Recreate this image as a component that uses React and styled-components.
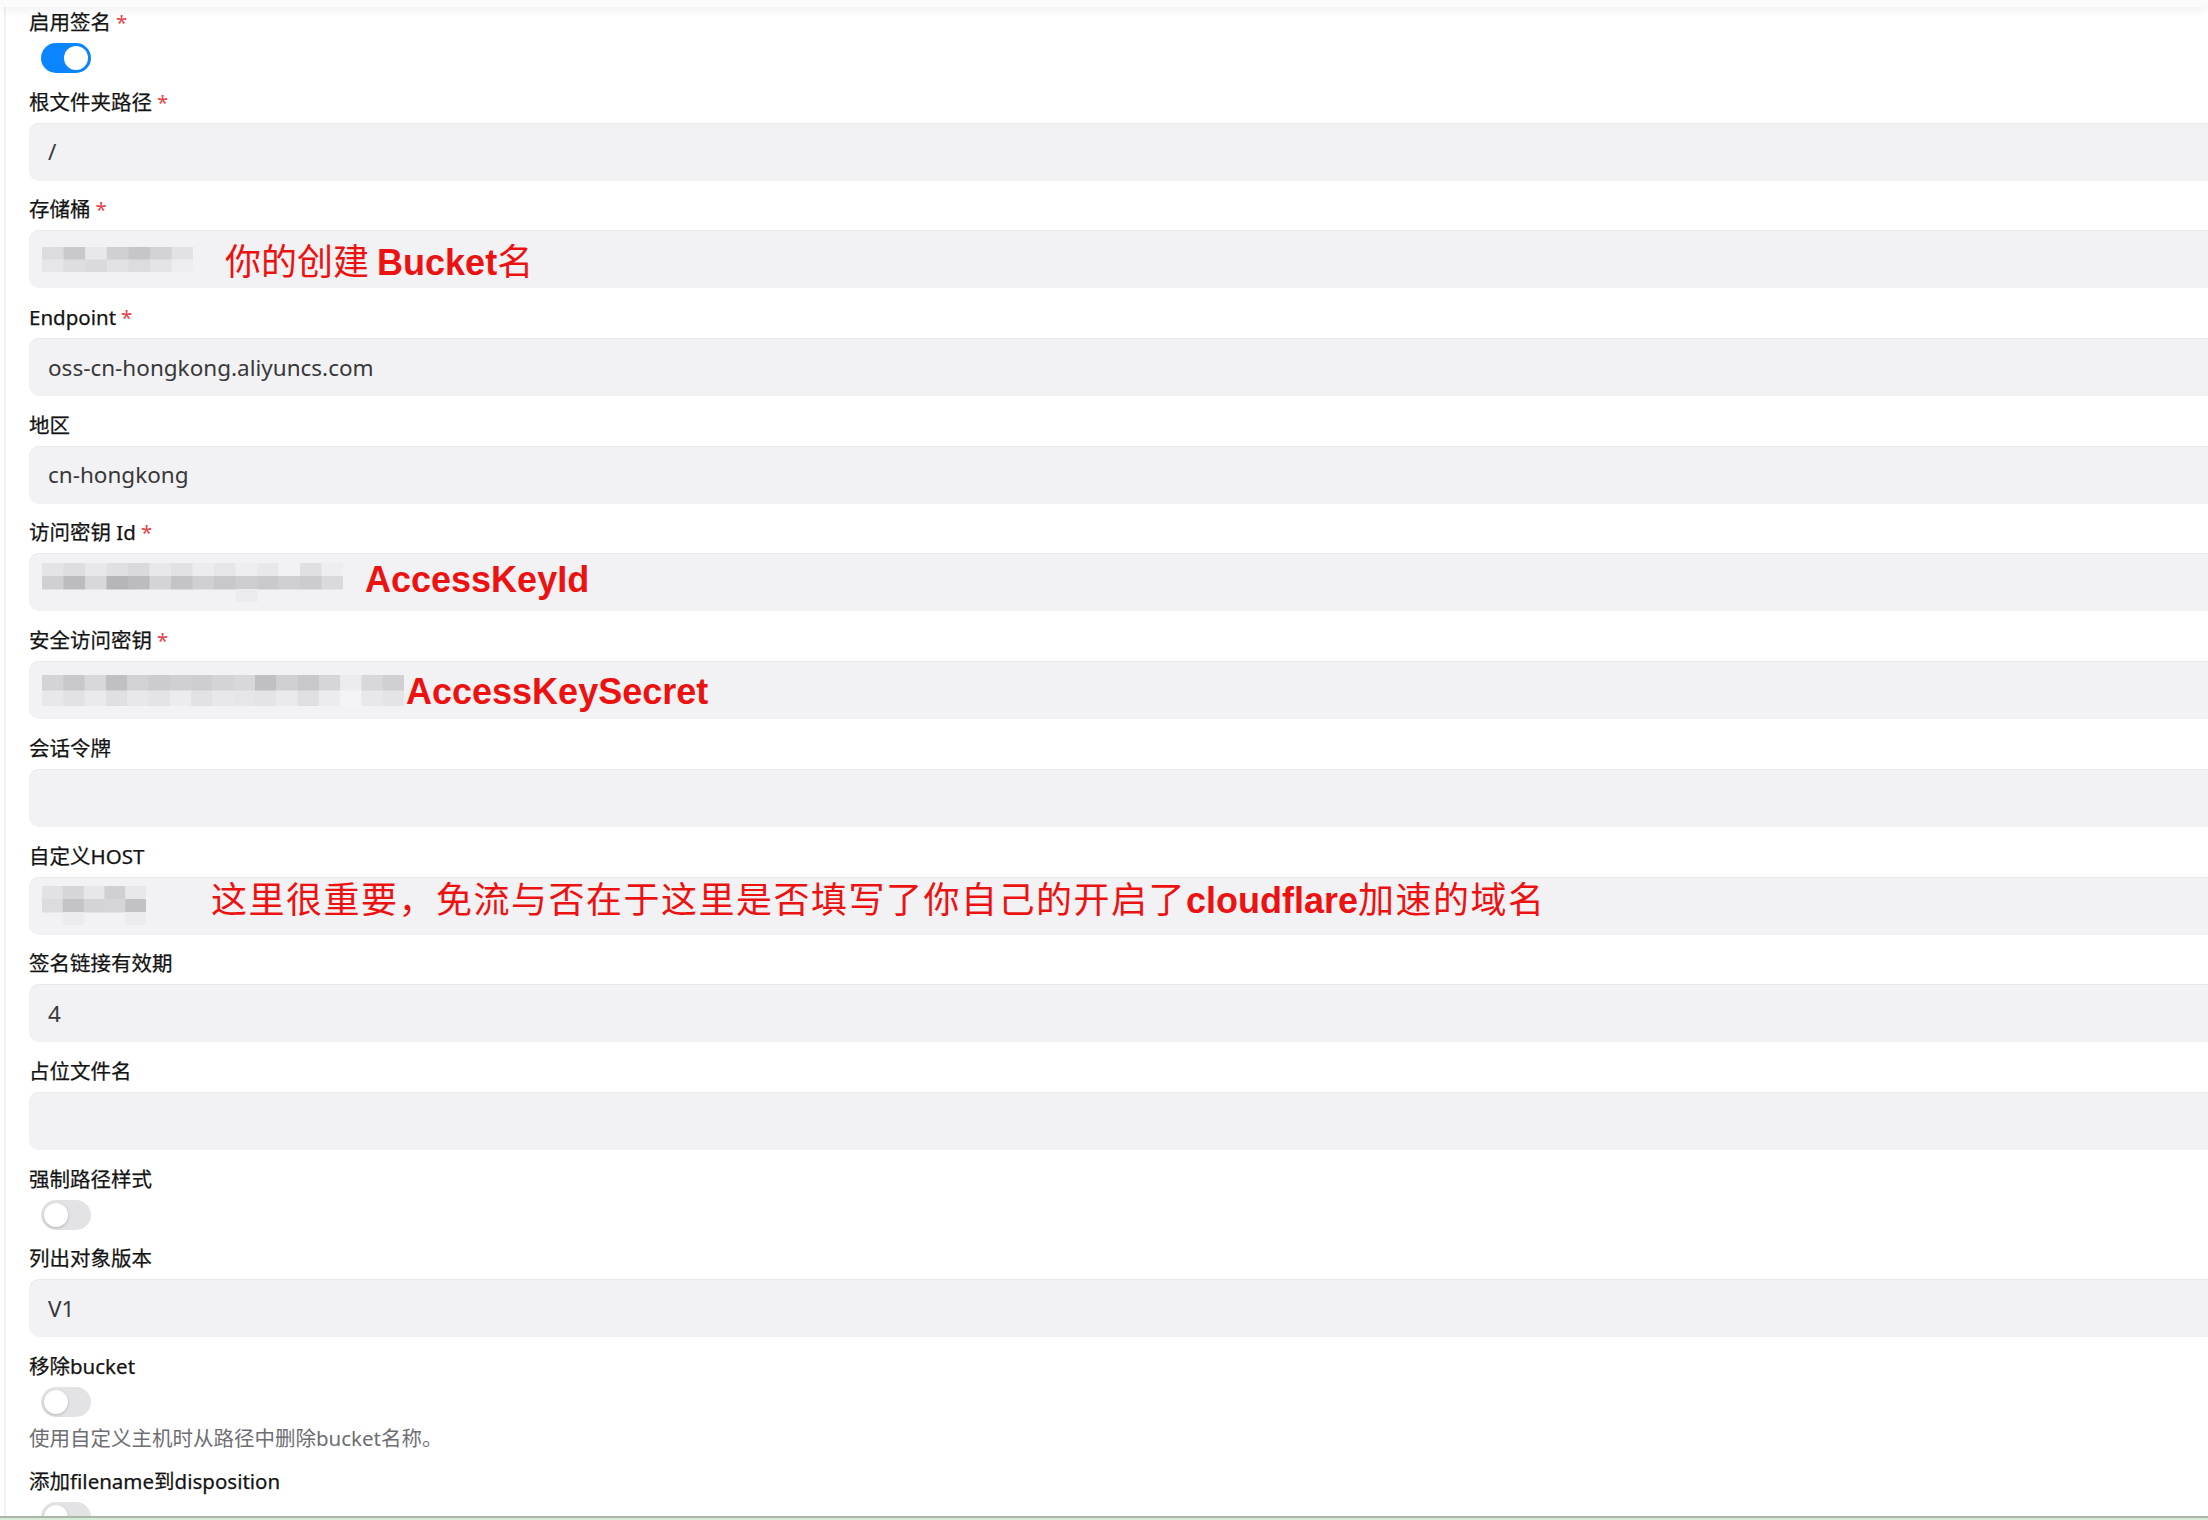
import React from 'react'
import styled, { createGlobalStyle } from 'styled-components'

const GlobalStyle = createGlobalStyle`
  html, body { margin: 0; padding: 0; background: #fff; }
  body {
    font-family: "Noto Sans", "Noto Sans CJK SC", sans-serif;
    -webkit-font-smoothing: antialiased;
  }
`

const Page = styled.div`
  height: 100vh;
  display: flex;
  flex-direction: column;
  overflow: hidden;
  background: #fff;
`

const TopBar = styled.div`
  flex: none;
  height: 7px;
  background: #fbfbfb;
  box-shadow: 0 3px 10px rgba(0, 0, 0, 0.07);
  position: relative;
  z-index: 1;
`

const Main = styled.main`
  flex: 1;
  min-height: 0;
  overflow: hidden;
  margin-left: 4px;
  border-left: 2px solid #f1f1f2;
  padding-left: 23px;
`

const BottomEdge = styled.div`
  flex: none;
  height: 2px;
  border-top: 2px solid #a9b6a9;
  background: #d6ecd6;
`

const Form = styled.div`
  display: flex;
  flex-direction: column;
  gap: 13.7px;
  margin-right: -40px;
`

const Field = styled.div`
  display: flex;
  flex-direction: column;
  align-items: flex-start;
`

const Label = styled.div`
  height: 30px;
  line-height: 30px;
  margin-bottom: 6px;
  font-size: 20.5px;
  font-weight: 400;
  color: #141414;
  -webkit-text-stroke: 0.25px #141414;
  white-space: nowrap;
`

const Star = styled.span`
  margin-left: 5px;
  color: #e5474d;
  -webkit-text-stroke: 0;
`

const InputBox = styled.div`
  align-self: stretch;
  height: 58px;
  box-sizing: border-box;
  display: flex;
  align-items: center;
  padding-left: ${p => (p.$masked ? 13 : 19)}px;
  border-radius: 10px;
  background: #f2f2f4;
  box-shadow: inset 0 1px 0 #e9e9eb;
  font-size: 22.5px;
  color: #38383a;
  white-space: nowrap;
`

const Switch = styled.div`
  position: relative;
  width: 50px;
  height: 30px;
  margin-left: 12px;
  border-radius: 15px;
  background: ${p => (p.$on ? '#0a84ff' : '#e3e3e6')};

  &::after {
    content: '';
    position: absolute;
    top: 3px;
    left: ${p => (p.$on ? 23 : 3)}px;
    width: 24px;
    height: 24px;
    border-radius: 50%;
    background: #fff;
    box-shadow: ${p => (p.$on ? 'none' : '0 1px 3px rgba(0,0,0,0.22)')};
  }
`

const Help = styled.div`
  margin-top: 7px;
  line-height: 28px;
  font-size: 20.5px;
  color: #6e6e73;
`

const Note = styled.span`
  margin-left: ${p => p.$gap}px;
  transform: translateY(${p => p.$dy || 0}px);
  font-family: "Noto Sans CJK SC", sans-serif;
  font-size: 36px;
  line-height: 1;
  color: #ec1212;
  letter-spacing: ${p => p.$spacing || 0}px;
  white-space: nowrap;
`

const Strong = styled.b`
  font-family: "Liberation Sans", Arial, sans-serif;
  font-weight: 700;
  letter-spacing: 0;
`

function Mosaic({ rows, cellW, cellH }) {
  const w = Math.round(rows[0].length * cellW)
  const h = Math.round(rows.length * cellH)
  return (
    <svg width={w} height={h} viewBox={`0 0 ${w} ${h}`} style={{ flex: 'none' }}>
      {rows.map((row, r) =>
        row.map((v, c) =>
          v >= 255 ? null : (
            <rect
              key={`${r}-${c}`}
              x={c * cellW}
              y={r * cellH}
              width={cellW + 0.5}
              height={cellH + 0.5}
              fill={`rgb(${v},${v},${v + 2})`}
            />
          )
        )
      )}
    </svg>
  )
}

const bucketMask = [
  [220, 200, 232, 208, 198, 210, 226],
  [230, 222, 218, 226, 220, 228, 238]
]

const idMask = [
  [228, 222, 232, 224, 218, 232, 226, 236, 230, 238, 232, 242, 224, 238],
  [208, 188, 216, 182, 188, 212, 196, 208, 200, 206, 202, 208, 204, 218],
  [255, 255, 255, 255, 255, 255, 255, 255, 255, 236, 255, 255, 255, 255]
]

const secretMask = [
  [212, 200, 216, 192, 210, 204, 208, 206, 212, 216, 192, 208, 200, 214, 236, 216, 208],
  [232, 226, 234, 224, 232, 228, 236, 226, 232, 230, 228, 234, 224, 236, 244, 232, 228]
]

const hostMask = [
  [226, 214, 230, 208, 232],
  [220, 196, 212, 214, 194],
  [255, 236, 255, 255, 236]
]

const fields = [
  { label: '启用签名', required: true, toggle: true, on: true },
  { label: '根文件夹路径', required: true, value: '/' },
  {
    label: '存储桶',
    required: true,
    mask: { rows: bucketMask, cellW: 21.6, cellH: 12.5 },
    note: (
      <Note $gap={32} $dy={2}>
        你的创建 <Strong>Bucket</Strong>名
      </Note>
    )
  },
  { label: 'Endpoint', required: true, value: 'oss-cn-hongkong.aliyuncs.com' },
  { label: '地区', value: 'cn-hongkong' },
  {
    label: '访问密钥 Id',
    required: true,
    mask: { rows: idMask, cellW: 21.5, cellH: 13 },
    note: (
      <Note $gap={22} $dy={-4}>
        <Strong>AccessKeyId</Strong>
      </Note>
    )
  },
  {
    label: '安全访问密钥',
    required: true,
    mask: { rows: secretMask, cellW: 21.3, cellH: 15.5 },
    note: (
      <Note $gap={2}>
        <Strong>AccessKeySecret</Strong>
      </Note>
    )
  },
  { label: '会话令牌', value: '' },
  {
    label: '自定义HOST',
    mask: { rows: hostMask, cellW: 20.8, cellH: 13 },
    note: (
      <Note $gap={65} $spacing={1.5} $dy={-7}>
        这里很重要，免流与否在于这里是否填写了你自己的开启了<Strong>cloudflare</Strong>加速的域名
      </Note>
    )
  },
  { label: '签名链接有效期', value: '4' },
  { label: '占位文件名', value: '' },
  { label: '强制路径样式', toggle: true },
  { label: '列出对象版本', value: 'V1' },
  { label: '移除bucket', toggle: true, help: '使用自定义主机时从路径中删除bucket名称。' },
  { label: '添加filename到disposition', toggle: true }
]

function FormField({ field }) {
  return (
    <Field>
      <Label>
        {field.label}
        {field.required && <Star>*</Star>}
      </Label>
      {field.toggle ? (
        <Switch $on={field.on} />
      ) : (
        <InputBox $masked={!!field.mask}>
          {field.mask && <Mosaic {...field.mask} />}
          {field.value}
          {field.note}
        </InputBox>
      )}
      {field.help && <Help>{field.help}</Help>}
    </Field>
  )
}

export default function App() {
  return (
    <Page>
      <GlobalStyle />
      <TopBar />
      <Main>
        <Form>
          {fields.map(f => (
            <FormField key={f.label} field={f} />
          ))}
        </Form>
      </Main>
      <BottomEdge />
    </Page>
  )
}
